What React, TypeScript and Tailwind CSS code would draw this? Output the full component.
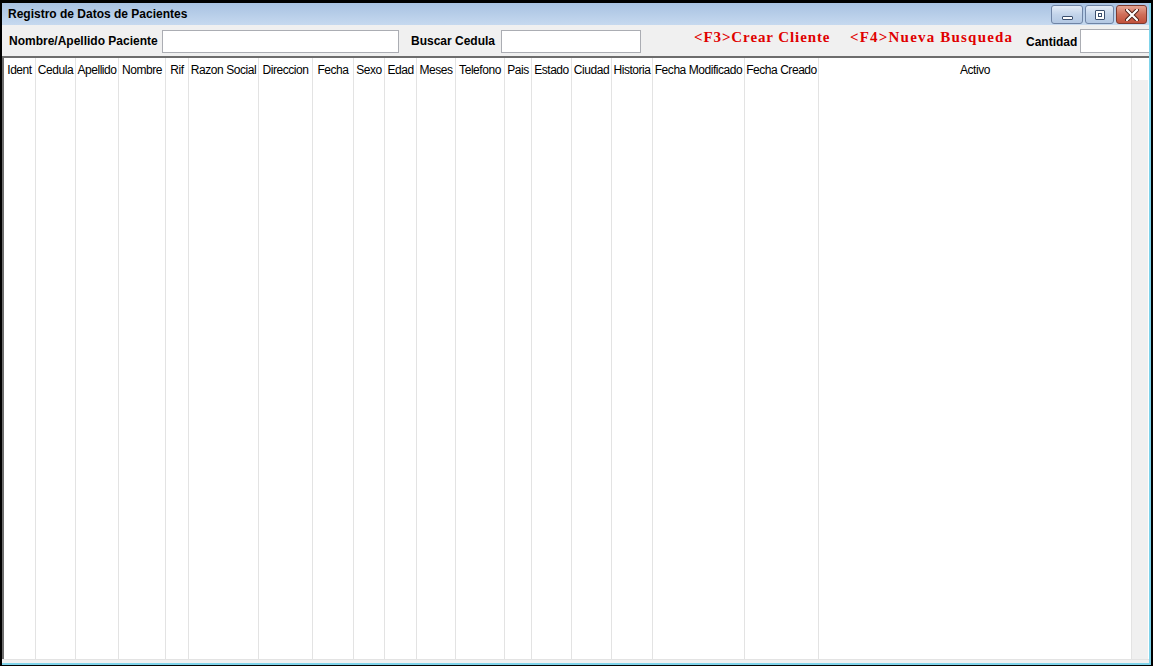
const columns = [
  { name: 'Ident', w: 'w-[32px]' },
  { name: 'Cedula', w: 'w-[40px]' },
  { name: 'Apellido', w: 'w-[43px]' },
  { name: 'Nombre', w: 'w-[47px]' },
  { name: 'Rif', w: 'w-[23px]' },
  { name: 'Razon Social', w: 'w-[70px]' },
  { name: 'Direccion', w: 'w-[54px]' },
  { name: 'Fecha', w: 'w-[41px]' },
  { name: 'Sexo', w: 'w-[31px]' },
  { name: 'Edad', w: 'w-[32px]' },
  { name: 'Meses', w: 'w-[39px]' },
  { name: 'Telefono', w: 'w-[49px]' },
  { name: 'Pais', w: 'w-[27px]' },
  { name: 'Estado', w: 'w-[40px]' },
  { name: 'Ciudad', w: 'w-[40px]' },
  { name: 'Historia', w: 'w-[41px]' },
  { name: 'Fecha Modificado', w: 'w-[92px]' },
  { name: 'Fecha Creado', w: 'w-[74px]' },
  { name: 'Activo', w: 'w-[313px]' },
]

function TitleButtons() {
  return (
    <div className="flex items-start gap-[2px] pt-[2px] pr-[2px]">
      <div className="flex h-[19px] w-[32px] items-center justify-center rounded-[3px] border border-[#6f84a5] bg-gradient-to-b from-[#e4ecf7] via-[#c3d4ea] to-[#b3c8e3]">
        <div className="mt-[6px] h-[4px] w-[11px] rounded-[1px] border border-[#3b4f6e] bg-white" />
      </div>
      <div className="flex h-[19px] w-[29px] items-center justify-center rounded-[3px] border border-[#6f84a5] bg-gradient-to-b from-[#e4ecf7] via-[#c3d4ea] to-[#b3c8e3]">
        <div className="flex h-[10px] w-[10px] items-center justify-center rounded-[1px] border border-[#3b4f6e] bg-white">
          <div className="h-[4px] w-[4px] border border-[#3b4f6e]" />
        </div>
      </div>
      <div className="flex h-[19px] w-[31px] items-center justify-center rounded-[3px] border border-[#7d3a2e] bg-gradient-to-b from-[#e5a493] via-[#cf6f5a] to-[#c2503a]">
        <svg width="14" height="12" viewBox="0 0 14 12">
          <path d="M2 1 L12 11 M12 1 L2 11" stroke="#4a1d15" strokeWidth="4" strokeLinecap="round" />
          <path d="M2 1 L12 11 M12 1 L2 11" stroke="#ffffff" strokeWidth="2.2" strokeLinecap="round" />
        </svg>
      </div>
    </div>
  )
}

function Field({ w }: { w: string }) {
  return <div className={`h-[23px] ${w} border border-[#abadb3] bg-white`} />
}

export default function App() {
  return (
    <main className="h-[666px] w-[1153px] overflow-hidden bg-black pt-[3px] pl-[2px] pr-[2px] pb-[1px] font-['Liberation_Sans',Arial,sans-serif] text-black">
      <div className="flex h-full flex-col border-r-2 border-b-2 border-[#7fd3ea] bg-[#f0f0f0]">
        <header className="flex h-[22px] shrink-0 items-start justify-between bg-gradient-to-b from-[#a8c2e2] to-[#c6d9ef]">
          <h1 className="pl-[6px] pt-[3px] text-[12px] font-bold leading-[16px]">
            Registro de Datos de Pacientes
          </h1>
          <TitleButtons />
        </header>

        <div className="flex h-[31px] shrink-0 items-center pt-[1px] text-[12px] font-bold">
          <span className="ml-[7px] w-[153px]">Nombre/Apellido Paciente</span>
          <Field w="w-[237px]" />
          <span className="ml-[12px] w-[90px]">Buscar Cedula</span>
          <Field w="w-[140px]" />
          <span className="ml-[53px] w-[156px] -translate-y-[4px] font-['Liberation_Serif',serif] text-[15px] tracking-[0.9px] text-[#e00000]">
            &lt;F3&gt;Crear Cliente
          </span>
          <span className="w-[176px] -translate-y-[4px] font-['Liberation_Serif',serif] text-[15px] tracking-[1.2px] text-[#e00000]">
            &lt;F4&gt;Nueva Busqueda
          </span>
          <span className="w-[54px] pt-[2px]">Cantidad</span>
          <div className="h-[24px] flex-1 border border-r-0 border-[#abadb3] bg-white" />
        </div>

        <section className="flex min-h-0 flex-1 border-t-2 border-l-2 border-[#6d6d6d] bg-white">
          {columns.map((col) => (
            <div key={col.name} className={`${col.w} shrink-0 border-r border-[#e3e3e3]`}>
              <div className="flex h-[22px] items-center justify-center whitespace-nowrap pt-[1px] text-[12px] tracking-[-0.45px]">
                {col.name}
              </div>
            </div>
          ))}
          <div className="flex w-[16px] shrink-0 flex-col">
            <div className="h-[22px] bg-white" />
            <div className="flex-1 bg-[#f0f0f0]" />
          </div>
        </section>
        <div className="h-[4px] shrink-0 border-t border-[#e3e3e3] bg-[#f0f0f0]" />
      </div>
    </main>
  )
}
